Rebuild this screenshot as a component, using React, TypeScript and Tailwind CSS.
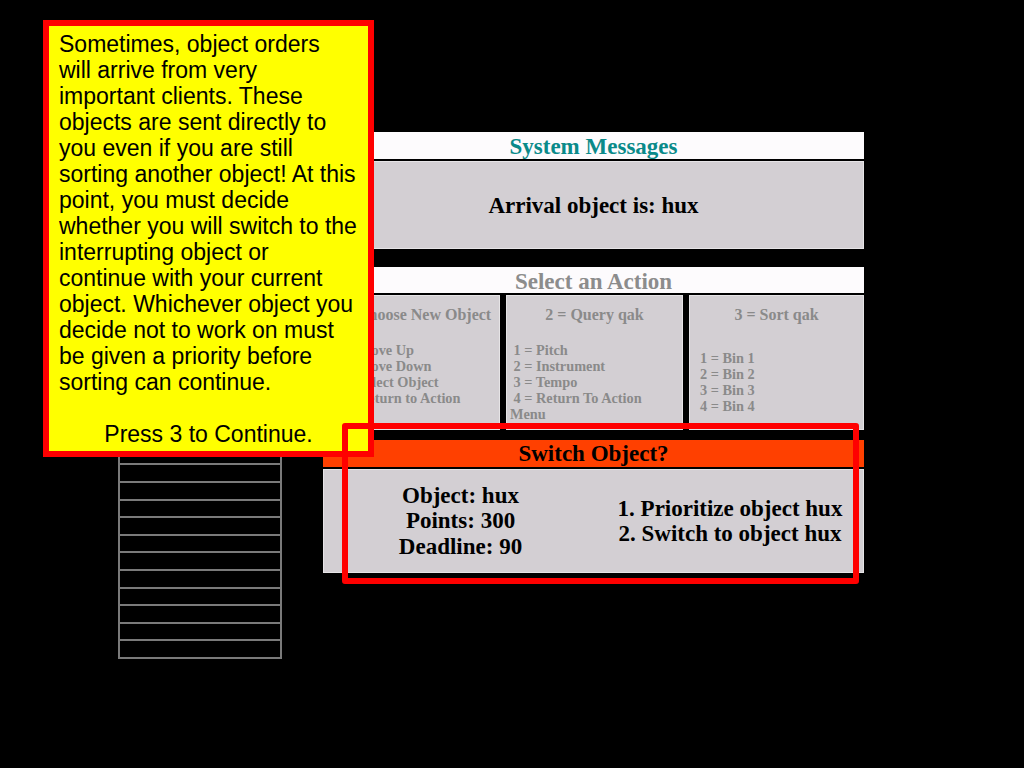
import React from "react";

const serif = "font-['Liberation_Serif','Times_New_Roman',serif]";

const noteLines = [
  "Sometimes, object orders",
  "will arrive from very",
  "important clients. These",
  "objects are sent directly to",
  "you even if you are still",
  "sorting another object! At this",
  "point, you must decide",
  "whether you will switch to the",
  "interrupting object or",
  "continue with your current",
  "object. Whichever object you",
  "decide not to work on must",
  "be given a priority before",
  "sorting can continue.",
];

const columns = [
  {
    title: "1 = Choose New Object",
    pad: "pl-[8px]",
    items: ["\u00a01 = Move Up", "\u00a02 = Move Down", "\u00a03 = Select Object", "\u00a04 = Return to Action", "Menu"],
  },
  {
    title: "2 = Query qak",
    pad: "pl-[3px]",
    items: ["\u00a01 = Pitch", "\u00a02 = Instrument", "\u00a03 = Tempo", "\u00a04 = Return To Action", "Menu"],
  },
  {
    title: "3 = Sort qak",
    pad: "pl-[10px]",
    items: ["1 = Bin 1", "2 = Bin 2", "3 = Bin 3", "4 = Bin 4"],
  },
];

function BinList() {
  return (
    <div className="w-[164px] mt-[173px] border-x-2 border-b-2 border-[#7a7a7a]">
      {Array.from({ length: 20 }).map((_, i) => (
        <div key={i} className="h-[17.6px] border-t-2 border-[#7a7a7a]" />
      ))}
    </div>
  );
}

export default function App() {
  return (
    <div className={`relative h-screen w-full min-h-[768px] bg-black overflow-hidden ${serif}`}>
      <div className="flex gap-[41px] pt-[132px] pl-[118px]">
        <BinList />

        <div className="w-[541px] flex flex-col font-bold">
          {/* system messages */}
          <div className="h-[27px] bg-[#fdfbfd] pt-[1px] text-center text-[23px] leading-[27px] text-[#0a8a8a]">
            System Messages
          </div>
          <div className="mt-[2px] h-[88px] bg-[#d3cfd3] border border-[#e6e4e6] pt-[3px] flex items-center justify-center text-[23px] text-black">
            Arrival object is: hux
          </div>

          {/* actions */}
          <div className="mt-[18px] h-[26px] bg-[#fdfbfd] pt-[1px] text-center text-[23px] leading-[27px] text-[#8c8c8c]">
            Select an Action
          </div>
          <div className="mt-[2px] grid grid-cols-[177px_177px_175px] gap-x-[6px] h-[135px]">
            {columns.map((c) => (
              <div key={c.title} className="bg-[#d3cfd3] border border-[#e6e4e6] flex flex-col text-[#8a8a8a]">
                <div className="pt-[10px] text-center text-[16px] leading-[18px] whitespace-nowrap">{c.title}</div>
                <div className={`flex-1 flex flex-col justify-center pt-[11px] text-[14.3px] leading-[16px] ${c.pad}`}>
                  {c.items.map((it) => (
                    <div key={it} className="whitespace-nowrap">{it}</div>
                  ))}
                </div>
              </div>
            ))}
          </div>

          {/* switch prompt */}
          <div className="mt-[10px] h-[27px] bg-[#ff4000] text-center text-[23px] leading-[27px] text-black">
            Switch Object?
          </div>
          <div className="mt-[2px] h-[104px] bg-[#d3cfd3] border border-[#e6e4e6] grid grid-cols-[273px_1fr] items-center text-[23px] text-black">
            <div className="text-center leading-[25.5px]">
              <div>Object: hux</div>
              <div>Points: 300</div>
              <div>Deadline: 90</div>
            </div>
            <div className="text-center leading-[25px] whitespace-nowrap">
              <div>1. Prioritize object hux</div>
              <div>2. Switch to object hux</div>
            </div>
          </div>
        </div>
      </div>

      {/* tutorial note */}
      <div className="absolute left-[43px] top-[20px] w-[331px] h-[437px] border-[6px] border-[#ff0000] bg-[#ffff00] pt-[5px] px-[10px] font-['Liberation_Sans',Arial,sans-serif] text-[23px] leading-[26px] text-black whitespace-nowrap">
        {noteLines.map((l) => (
          <div key={l}>{l}</div>
        ))}
        <div className="h-[26px]" />
        <div className="text-center">Press 3 to Continue.</div>
      </div>

      {/* highlight */}
      <div className="absolute left-[342px] top-[423px] w-[517px] h-[161px] border-[6px] border-[#ff0000] rounded-[3px]" />
    </div>
  );
}
